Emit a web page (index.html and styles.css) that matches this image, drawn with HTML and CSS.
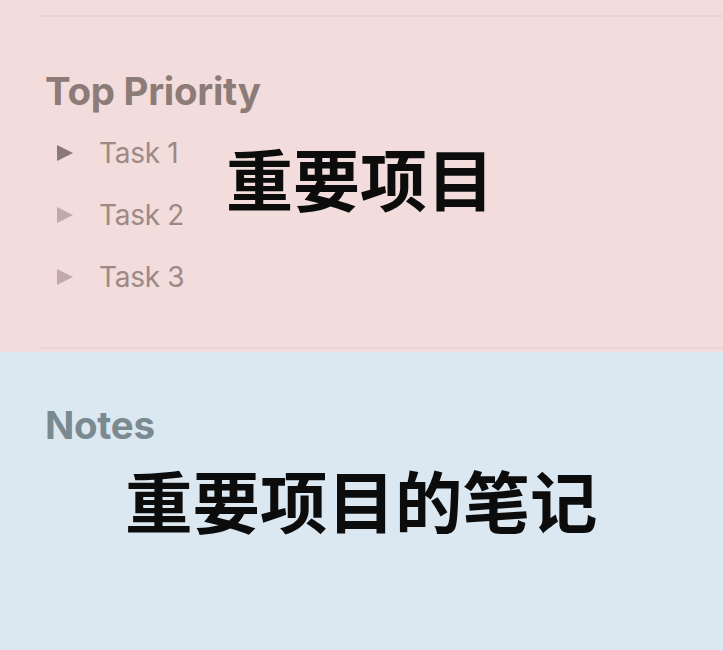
FILE: index.html
```html
<!DOCTYPE html>
<html lang="zh">
<head>
<meta charset="utf-8">
<title>Top Priority</title>
<link rel="stylesheet" href="styles.css">
</head>
<body>
<section class="panel panel-pink">
  <div class="rule"></div>
  <h2 class="heading heading-pink">Top Priority</h2>
  <ul class="tasks">
    <li class="task"><span class="tri tri-dark"></span><span class="task-label">Task 1</span></li>
    <li class="task"><span class="tri"></span><span class="task-label">Task 2</span></li>
    <li class="task"><span class="tri"></span><span class="task-label">Task 3</span></li>
  </ul>
  <div class="rule rule-bottom"></div>
  <div class="caption caption-top">重要项目</div>
</section>
<section class="panel panel-blue">
  <h2 class="heading heading-blue">Notes</h2>
  <div class="caption-notes">重要项目的笔记</div>
</section>
</body>
</html>
```

FILE: styles.css
```css
html, body {
  margin: 0;
  padding: 0;
}
body {
  width: 723px;
  height: 650px;
  overflow: hidden;
  font-family: Inter, "Noto Sans", "Noto Sans CJK SC", sans-serif;
  background: #dce8f1;
}
.panel {
  position: relative;
  padding-left: 41px;
}
.panel-pink {
  background: #f2dcdc;
  height: 352px;
  box-sizing: border-box;
  padding-top: 15px;
}
.panel-blue {
  background: #dce8f1;
  height: 298px;
  box-sizing: border-box;
  padding-top: 51px;
}
.rule {
  height: 2px;
  background: #ecd3d3;
}
.rule-bottom {
  margin-top: 52px;
}
.heading {
  margin: 0;
  padding-left: 4px;
  font-size: 38.5px;
  font-weight: 700;
  line-height: 44px;
  letter-spacing: -0.3px;
}
.heading-pink {
  margin-top: 52px;
  color: #8c7b77;
}
.heading-blue {
  color: #7b8a90;
}
.tasks {
  list-style: none;
  margin: 22px 0 0 0;
  padding: 0 0 0 16px;
  display: flex;
  flex-direction: column;
  gap: 26px;
}
.task {
  display: flex;
  align-items: center;
  height: 36px;
  gap: 26px;
}
.tri {
  width: 0;
  height: 0;
  border-top: 8.5px solid transparent;
  border-bottom: 8.5px solid transparent;
  border-left: 16px solid #c1aaa9;
}
.tri-dark {
  border-left-color: #8a7a76;
}
.task-label {
  font-size: 28px;
  color: #9d8985;
  letter-spacing: -0.3px;
}
.caption {
  position: absolute;
  font-family: "Noto Sans CJK SC", sans-serif;
  font-weight: 700;
  color: #0c0c0c;
  line-height: 1;
}
.caption-top {
  left: 226px;
  top: 143px;
  font-size: 67px;
}
.caption-notes {
  font-family: "Noto Sans CJK SC", sans-serif;
  font-weight: 700;
  color: #0c0c0c;
  font-size: 67.5px;
  line-height: 1;
  margin-top: 18px;
  padding-left: 84px;
}
```
